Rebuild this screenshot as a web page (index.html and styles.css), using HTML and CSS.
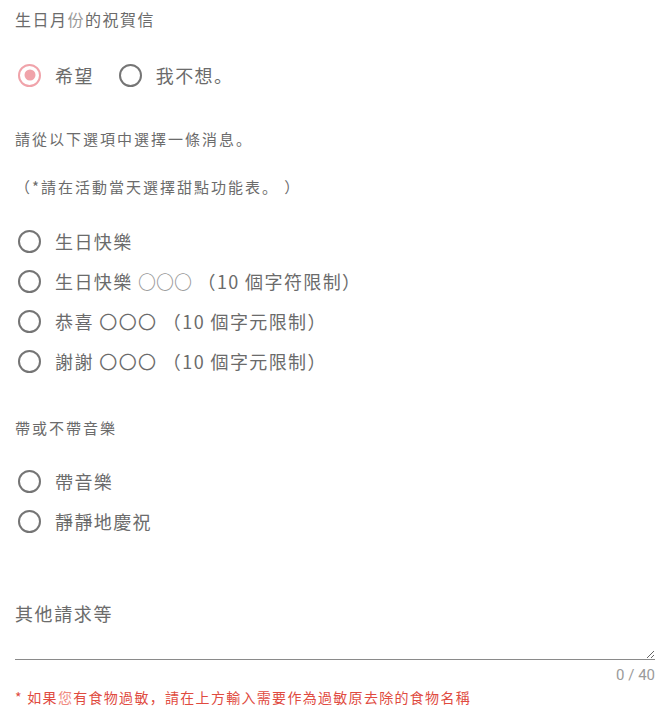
FILE: index.html
```html
<!DOCTYPE html>
<html lang="zh-Hant">
<head>
  <meta charset="UTF-8">
  <meta name="viewport" content="width=device-width, initial-scale=1.0">
  <title>生日月份的祝賀信</title>
  <link rel="stylesheet" href="styles.css">
</head>
<body>
  <div class="form">
    <p class="title">生日月<span class="light_g">份</span>的祝賀信</p>
    <div class="choice_row">
      <label class="opt"><span class="radio on"></span>希望</label>
      <label class="opt"><span class="radio"></span>我不想。</label>
    </div>

    <p class="txt txt01">請從以下選項中選擇一條消息。</p>
    <p class="txt txt02">（*請在活動當天選擇甜點功能表。 ）</p>
    <div class="opt_list list01">
      <label class="opt"><span class="radio"></span>生日快樂</label>
      <label class="opt"><span class="radio"></span>生日快樂&nbsp;<span class="thin">〇〇〇</span>&nbsp;（10 個字符限制）</label>
      <label class="opt"><span class="radio"></span>恭喜 〇〇〇 （10 個字元限制）</label>
      <label class="opt"><span class="radio"></span>謝謝 〇〇〇 （10 個字元限制）</label>
    </div>

    <p class="txt txt03">帶或不帶音樂</p>
    <div class="opt_list list02">
      <label class="opt"><span class="radio"></span>帶音樂</label>
      <label class="opt"><span class="radio"></span>靜靜地慶祝</label>
    </div>

    <p class="req_label">其他請求等</p>
    <textarea class="req_box" maxlength="40"></textarea>
    <p class="count">0 / 40</p>
    <p class="note">* 如果<span class="light">您</span>有食物過敏，請在上方輸入需要作為過敏原去除的食物名稱</p>
  </div>
</body>
</html>
```

FILE: styles.css
```css
*{margin:0;padding:0;box-sizing:border-box;}
/* 句號、逗號放在左下 (SC glyph) */
body{background-color:#fff;font-family:"Noto Sans CJK SC","Noto Sans CJK TC","Noto Sans",sans-serif;font-feature-settings:"locl" 0;color:#6b6b6b;}
.form{padding:0 14px 0 15px;}
.title{font-size:16px;line-height:38px;letter-spacing:1.5px;}
.light_g{color:#9a9a9a;}
.choice_row{display:flex;gap:22px;margin-top:17px;}
.opt{display:flex;align-items:center;height:40px;font-size:18px;letter-spacing:1.4px;white-space:nowrap;}
.radio{flex:none;width:23px;height:23px;border:2.5px solid #757575;border-radius:50%;margin:0 14px 0 3px;position:relative;}
.radio.on{border-color:#f0a3aa;}
.radio.on::after{content:"";position:absolute;left:50%;top:50%;width:11px;height:11px;border-radius:50%;background-color:#f0a3aa;transform:translate(-50%,-50%);}
.thin{color:#9a9a9a;font-weight:300;letter-spacing:0;}
.txt{font-size:15px;line-height:24px;letter-spacing:2px;}
.txt01{margin-top:32px;}
.txt02{margin-top:24px;}
.list01{margin-top:22px;}
.txt03{margin-top:35px;}
.list02{margin-top:21px;}
.req_label{margin-top:59px;font-size:18px;line-height:26px;letter-spacing:1.6px;}
.req_box{display:block;width:100%;height:34px;border:none;border-bottom:1px solid #8a8a8a;resize:vertical;outline:none;font-family:inherit;background:transparent;}
.count{margin-top:6px;text-align:right;font-family:Roboto,sans-serif;font-size:15px;line-height:18px;color:#9a9a9a;}
.note{margin-top:4px;font-size:14px;line-height:18px;letter-spacing:1.3px;color:#e04b3f;}
.light{color:#f08a80;}
```
